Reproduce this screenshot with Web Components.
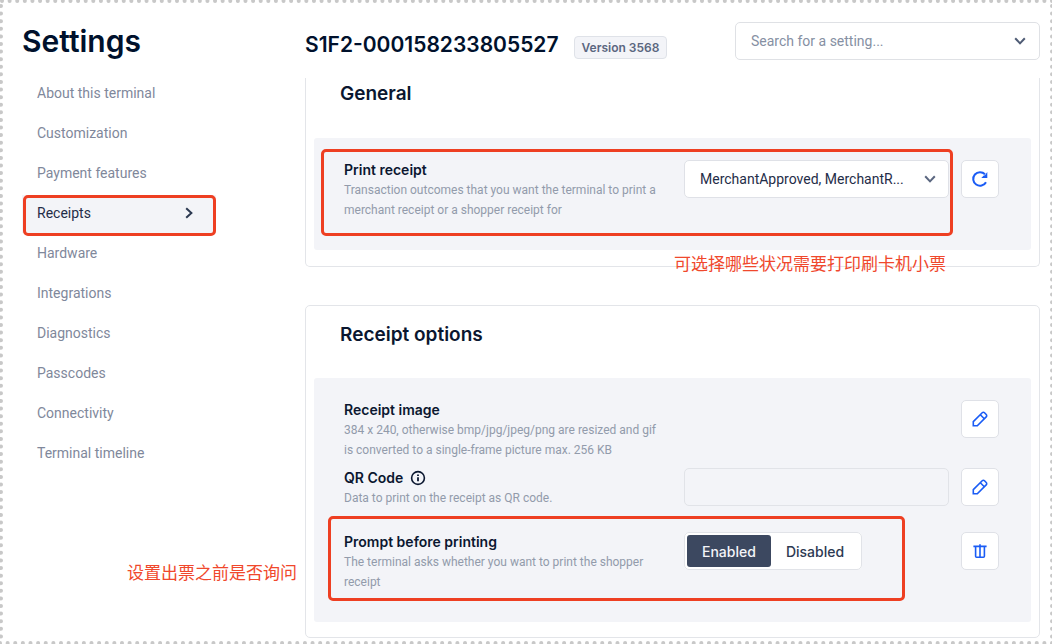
<!DOCTYPE html>
<html lang="en">
<head>
<meta charset="utf-8">
<title>Settings</title>
<style>
  body { margin: 0; background: #fff; font-family: Inter, "Noto Sans CJK SC", sans-serif; color: #0b1730; }
</style>
</head>
<body>
<settings-page>
  <settings-nav slot="side">
    <nav-item>About this terminal</nav-item>
    <nav-item>Customization</nav-item>
    <nav-item>Payment features</nav-item>
    <nav-item current>Receipts</nav-item>
    <nav-item>Hardware</nav-item>
    <nav-item>Integrations</nav-item>
    <nav-item>Diagnostics</nav-item>
    <nav-item>Passcodes</nav-item>
    <nav-item>Connectivity</nav-item>
    <nav-item>Terminal timeline</nav-item>
    <note-text slot="note">设置出票之前是否询问</note-text>
  </settings-nav>

  <terminal-header version="Version 3568">S1F2-000158233805527</terminal-header>

  <settings-card heading="General" continued>
    <setting-row label="Print receipt">
      Transaction outcomes that you want the terminal to print a merchant receipt or a shopper receipt for
      <select-box slot="control" label="Print receipt" value="MerchantApproved, MerchantR..."></select-box>
      <icon-button slot="action" icon="reset" label="Reset"></icon-button>
      <mark-box slot="mark" style="inset: -11px 46px -16px -23px"></mark-box>
    </setting-row>
    <note-text slot="note">可选择哪些状况需要打印刷卡机小票</note-text>
  </settings-card>

  <settings-card heading="Receipt options">
    <setting-row label="Receipt image">
      384 x 240, otherwise bmp/jpg/jpeg/png are resized and gif is converted to a single-frame picture max. 256 KB
      <icon-button slot="action" icon="edit" label="Edit receipt image"></icon-button>
    </setting-row>
    <setting-row label="QR Code" info spaced>
      Data to print on the receipt as QR code.
      <text-box slot="control" label="QR Code"></text-box>
      <icon-button slot="action" icon="edit" label="Edit QR code"></icon-button>
    </setting-row>
    <setting-row label="Prompt before printing">
      The terminal asks whether you want to print the shopper receipt
      <toggle-group slot="control" label="Prompt before printing"></toggle-group>
      <icon-button slot="action" icon="trash" label="Delete"></icon-button>
      <mark-box slot="mark" style="inset: -16px 94px -9px -16px"></mark-box>
    </setting-row>
  </settings-card>
</settings-page>

<script>
const define = (name, render) => customElements.define(name, class extends HTMLElement {
  connectedCallback() {
    if (this.shadowRoot) return;
    this.attachShadow({ mode: 'open' }).innerHTML =
      '<style>:host,*{box-sizing:border-box}</style>' + render(this);
  }
});

const chevron = `<svg class="chev" width="12" height="12" viewBox="0 0 12 12" fill="none" stroke="currentColor" stroke-width="2" aria-hidden="true"><path d="M1.2 3.2 6 8.4l4.8-5.2"/></svg>`;

const icons = {
  reset: `<path d="M15 12.2A6.8 6.8 0 1 1 14 4.3" stroke-width="2"/><path d="M16.3 2v6h-6l2.4-2.4 1.2-.4Z" fill="currentColor" stroke="none"/>`,
  edit: `<path d="M2.3 15.7v-4L11.2 2.8a1.6 1.6 0 0 1 2.3 0l1.7 1.7a1.6 1.6 0 0 1 0 2.3l-8.9 8.9Z"/><path d="m9.3 4.7 4 4"/>`,
  trash: `<path d="M2.4 4.4h13.2M4.6 4.4v9.8q0 1 1 1h6.8q1 0 1-1V4.4M9 2.2v13"/>`
};

define('settings-page', () => `
  <style>
    :host { display: block; position: relative; min-height: 100vh; overflow: hidden; }
    .frame { position: absolute; inset: 0; width: 100%; height: 100%; pointer-events: none; }
    .frame line { stroke: #c8c8c8; stroke-width: 4; stroke-linecap: round; stroke-dasharray: 0 1; }
    .cols { display: grid; grid-template-columns: 277px minmax(0, 1fr); column-gap: 6px; padding: 0 12px 6px 22px; }
    main { min-width: 0; }
  </style>
  <div class="cols"><slot name="side"></slot><main><slot></slot></main></div>
  <svg class="frame" aria-hidden="true">
    <line pathLength="138" x1="2" y1="1" x2="100%" y2="1"/>
    <line pathLength="138" x1="0" y1="100%" x2="100%" y2="100%" transform="translate(0 -1)"/>
    <line pathLength="84" x1="1" y1="6" x2="1" y2="100%"/>
    <line pathLength="84" x1="100%" y1="6" x2="100%" y2="100%"/>
  </svg>`);

define('settings-nav', () => `
  <style>
    :host { display: block; }
    h1 { margin: 0; padding-top: 21px; height: 73px; font-size: 30px; line-height: 40px; font-weight: 600; color: #00112c; }
    nav { display: grid; grid-auto-rows: 40px; width: 194px; }
    .note { margin-top: 87px; padding-right: 2px; text-align: right; }
  </style>
  <h1>Settings</h1>
  <nav aria-label="Settings"><slot></slot></nav>
  <div class="note"><slot name="note"></slot></div>`);

define('nav-item', el => `
  <style>
    :host { display: block; position: relative; }
    a { display: flex; align-items: center; justify-content: space-between; height: 40px; padding: 0 21px 0 15px;
        font-family: Roboto, sans-serif; font-size: 14px; color: #7f889b; text-decoration: none; }
    :host([current]) { padding-top: 2px; }
    :host([current]) a { height: 38px; padding-bottom: 2px; background: #f3f4f8; color: #1f2d48; }
    .chev { transform: rotate(-90deg); color: #2d3a52; }
    mark-box { inset: 2px 0 -3px 1px; }
  </style>
  <a href="#"${el.hasAttribute('current') ? ' aria-current="page"' : ''}><slot></slot>${el.hasAttribute('current') ? chevron : ''}</a>
  ${el.hasAttribute('current') ? '<mark-box></mark-box>' : ''}`);

define('terminal-header', el => `
  <style>
    :host { display: flex; justify-content: space-between; height: 78px; padding-top: 22px; }
    .title { display: flex; align-items: flex-start; gap: 15px; }
    h2 { margin: 0; padding-top: 7px; font-size: 21px; line-height: 32px; font-weight: 600; color: #00112c; }
    .badge { margin-top: 14px; padding: 0 7px; border: 1px solid #dfe2e8; border-radius: 4px; background: #f3f4f8;
             font-size: 12px; line-height: 21px; font-weight: 600; color: #5b6780; }
    .search { position: relative; flex: 0 0 305px; height: 38px; display: flex; align-items: center; padding: 0 13px 0 15px;
              border: 1px solid #dfe1e5; border-radius: 5px; }
    input { flex: 1; min-width: 0; border: 0; padding: 0; outline: 0; background: none; font: 14px/20px Roboto, sans-serif; color: #1f2d48; }
    input::placeholder { color: #8690a3; opacity: 1; }
    .chev { color: #4f5c75; }
  </style>
  <div class="title"><h2><slot></slot></h2><span class="badge">${el.getAttribute('version')}</span></div>
  <label class="search"><input type="text" role="combobox" aria-expanded="false" aria-label="Search for a setting" placeholder="Search for a setting...">${chevron}</label>`);

define('settings-card', el => `
  <style>
    :host { display: block; position: relative; border: 1px solid #e3e5e9; border-radius: 5px; padding: 17px 8px 15px; }
    :host([continued]) { border-top: 0; border-radius: 0 0 5px 5px; padding: 4px 8px 16px; margin-bottom: 38px; }
    h3 { margin: 0 0 31px; padding-left: 26px; font-size: 19px; line-height: 24px; font-weight: 600; color: #0b1730; }
    :host([continued]) h3 { margin-bottom: 32px; }
    .panel { display: grid; row-gap: 8px; padding: 22px 32px 30px 30px; background: #f3f4f8; border-radius: 3px; }
    .note { position: absolute; right: 93px; bottom: -9px; }
  </style>
  <h3>${el.getAttribute('heading')}</h3>
  <div class="panel"><slot></slot></div>
  <div class="note"><slot name="note"></slot></div>`);

define('setting-row', el => `
  <style>
    :host { display: grid; position: relative; grid-template-columns: minmax(0, 1fr) 265px 38px; column-gap: 12px; align-items: start; }
    :host([spaced]) { padding-bottom: 16px; }
    h4 { margin: 0; display: flex; align-items: center; gap: 7px; font-size: 14px; line-height: 20px; font-weight: 600; color: #0b1730; }
    p { margin: 0; max-width: 320px; font-family: Roboto, sans-serif; font-size: 12px; line-height: 20px; color: #929bab; }
    .action { grid-column: 3; }
  </style>
  <div><h4>${el.getAttribute('label')}${el.hasAttribute('info') ? `<svg width="16" height="16" viewBox="0 0 16 16" aria-hidden="true"><circle cx="8" cy="8" r="6.4" fill="none" stroke="currentColor" stroke-width="1.6"/><path d="M8 7.2v4M8 4.4v1.7" stroke="currentColor" stroke-width="1.8"/></svg>` : ''}</h4><p><slot></slot></p></div>
  <div><slot name="control"></slot></div>
  <div class="action"><slot name="action"></slot></div>
  <slot name="mark"></slot>`);

define('select-box', el => `
  <style>
    :host { display: grid; align-items: center; position: relative; }
    select { grid-area: 1 / 1; appearance: none; width: 100%; height: 38px; padding: 0 36px 0 15px; border: 1px solid #dfe1e7; border-radius: 5px;
             background: #fff; font: 14px/20px Roboto, sans-serif; color: #1f2d48; }
    .chev { grid-area: 1 / 1; justify-self: end; margin-right: 13px; color: #5b6780; pointer-events: none; }
  </style>
  <select aria-label="${el.getAttribute('label')}"><option>${el.getAttribute('value')}</option></select>${chevron}`);

define('text-box', el => `
  <style>
    :host { display: block; }
    input { display: block; width: 100%; height: 38px; padding: 0 15px; border: 1px solid #e1e3e8; border-radius: 5px; background: #f3f4f8; font: 14px Roboto, sans-serif; }
  </style>
  <input type="text" readonly aria-label="${el.getAttribute('label')}">`);

define('toggle-group', el => `
  <style>
    :host { display: block; }
    fieldset { margin: 0; display: inline-flex; min-width: 0; height: 38px; padding: 2px; border: 1px solid #e1e3e8; border-radius: 5px; background: #fff; vertical-align: top; }
    label { position: relative; display: flex; align-items: center; padding: 0 15px; border-radius: 3px; font-size: 14px; font-weight: 500; color: #2d3a52; }
    input { position: absolute; inset: 0; margin: 0; opacity: 0; }
    label:has(:checked) { background: #3c4860; color: #f3f4f8; }
  </style>
  <fieldset aria-label="${el.getAttribute('label')}">
    <label><input type="radio" name="prompt" checked>Enabled</label><label><input type="radio" name="prompt">Disabled</label>
  </fieldset>`);

define('icon-button', el => `
  <style>
    :host { display: block; }
    button { display: grid; place-items: center; width: 38px; height: 38px; padding: 0; border: 1px solid #dfe1e7; border-radius: 5px; background: #fff; color: #1a5cf5; }
  </style>
  <button type="button" aria-label="${el.getAttribute('label')}"><svg width="18" height="18" viewBox="0 0 18 18" fill="none" stroke="currentColor" stroke-width="1.6" aria-hidden="true">${icons[el.getAttribute('icon')]}</svg></button>`);

define('mark-box', () => `
  <style>:host { position: absolute; border: 3px solid #ee3f22; border-radius: 5px; pointer-events: none; }</style>`);

define('note-text', () => `
  <style>:host { display: block; font: 17px/24px "Noto Sans CJK SC", sans-serif; color: #f0482c; white-space: nowrap; }</style><slot></slot>`);
</script>
</body>
</html>
